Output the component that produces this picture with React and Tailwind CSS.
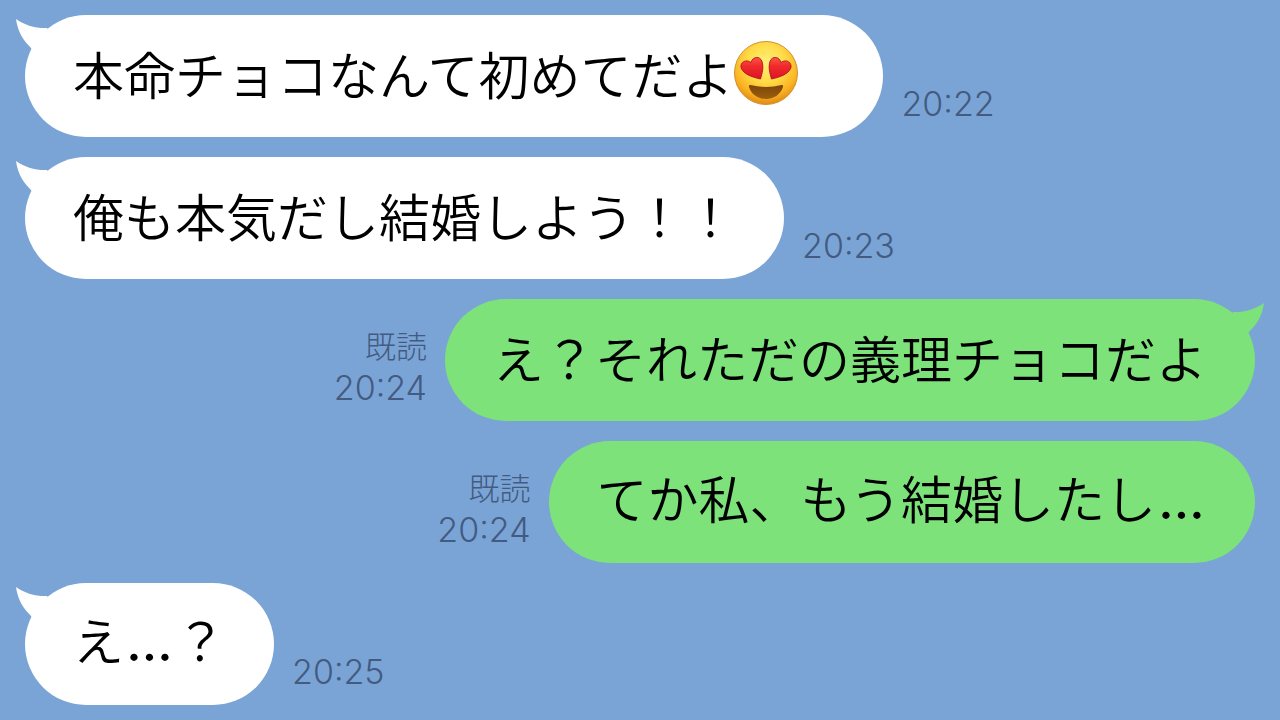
import React from "react";

const messages = [
  { id: 1, text: "本命チョコなんて初めてだよ", emoji: true, time: "20:22", tail: true },
  { id: 2, text: "俺も本気だし結婚しよう！！", time: "20:23", tail: true },
  { id: 3, text: "え？それただの義理チョコだよ", time: "20:24", mine: true, tail: true },
  { id: 4, text: "てか私、もう結婚したし…", time: "20:24", mine: true },
  { id: 5, text: "え…？", time: "20:25", tail: true },
];

function HeartEyes() {
  return (
    <svg
      viewBox="0 0 66 66"
      role="img"
      aria-label="ハートの目の笑顔"
      className="w-[66px] h-[66px] shrink-0 mr-9"
    >
      <defs>
        <radialGradient id="face" cx="50%" cy="34%" r="66%">
          <stop offset="0" stopColor="#fff07a" />
          <stop offset="0.45" stopColor="#ffdc48" />
          <stop offset="0.78" stopColor="#fbb421" />
          <stop offset="1" stopColor="#e08a14" />
        </radialGradient>
        <linearGradient id="heart" x1="0" y1="0" x2="0" y2="1">
          <stop offset="0" stopColor="#ff5548" />
          <stop offset="0.4" stopColor="#f02a2c" />
          <stop offset="1" stopColor="#dd1426" />
        </linearGradient>
        <linearGradient id="mouth" x1="0" y1="0" x2="0" y2="1">
          <stop offset="0" stopColor="#7a4508" />
          <stop offset="1" stopColor="#9c5f10" />
        </linearGradient>
      </defs>
      <circle cx="33" cy="33" r="31.5" fill="url(#face)" stroke="#cf9234" strokeWidth="1" />
      <path
        d="M17.500 45 Q33 49 48.500 45 Q50.500 44.800 50 47 C48 54 41 59 33 59 C25 59 18 54 16 47 Q15.500 44.800 17.500 45 Z"
        fill="url(#mouth)"
      />
      <path
        d="M27.500 39 C20.500 37.500 10.500 34.500 8.200 28 C6.500 22.500 13 18.500 18 22.500 C19.500 16.500 27 15.500 29 21.500 C31 27.500 29 33.500 27.500 39 Z"
        fill="url(#heart)"
        stroke="#b0121c"
        strokeWidth="0.9"
      />
      <path
        d="M38.500 39 C45.500 37.500 55.500 34.500 57.800 28 C59.500 22.500 53 18.500 48 22.500 C46.500 16.500 39 15.500 37 21.500 C35 27.500 37 33.500 38.500 39 Z"
        fill="url(#heart)"
        stroke="#b0121c"
        strokeWidth="0.9"
      />
    </svg>
  );
}

function Tail({ mine }) {
  return (
    <svg
      viewBox="0 0 36 40"
      aria-hidden="true"
      className={`absolute top-1 w-9 h-10 ${
        mine ? "-right-[9px] -scale-x-100 text-[#7de27a]" : "-left-[9px] text-white"
      }`}
    >
      <path
        d="M0 0 C8 6 20 9.500 31 9 L36 18 L20 38 L15 29 C8 22 2 14 0 0 Z"
        fill="currentColor"
      />
    </svg>
  );
}

function MessageText({ text }) {
  return text.split(/(…)/).map((part, i) =>
    part === "…" ? (
      <span key={i} className="inline-block w-[51px] text-center font-['Inter'] font-medium">
        …
      </span>
    ) : (
      part
    )
  );
}

function Message({ message }) {
  const { text, emoji, time, mine, tail } = message;

  return (
    <li className={`flex items-end gap-[18px] ${mine ? "flex-row-reverse" : ""}`}>
      <div
        className={`relative flex items-center h-[122px] px-12 pb-[6px] rounded-full ${
          mine ? "bg-[#7de27a]" : "bg-white"
        }`}
      >
        {tail && <Tail mine={mine} />}
        <p className="text-[51px] leading-[60px] font-[350] text-black whitespace-nowrap">
          <MessageText text={text} />
        </p>
        {emoji && <HeartEyes />}
      </div>
      <div
        className={`pb-[13px] font-light text-[#435b80] whitespace-nowrap ${
          mine ? "text-right" : ""
        }`}
      >
        {mine && <div className="pb-1 text-[31px] leading-9">既読</div>}
        <time className="block font-['Inter'] text-[34px] leading-[41px]">{time}</time>
      </div>
    </li>
  );
}

export default function App() {
  return (
    <main className="min-h-screen bg-[#7ba4d6] font-['Noto_Sans_CJK_JP',sans-serif] overflow-hidden">
      <ul className="flex flex-col gap-5 px-[25px] py-[15px]">
        {messages.map((message) => (
          <Message key={message.id} message={message} />
        ))}
      </ul>
    </main>
  );
}
